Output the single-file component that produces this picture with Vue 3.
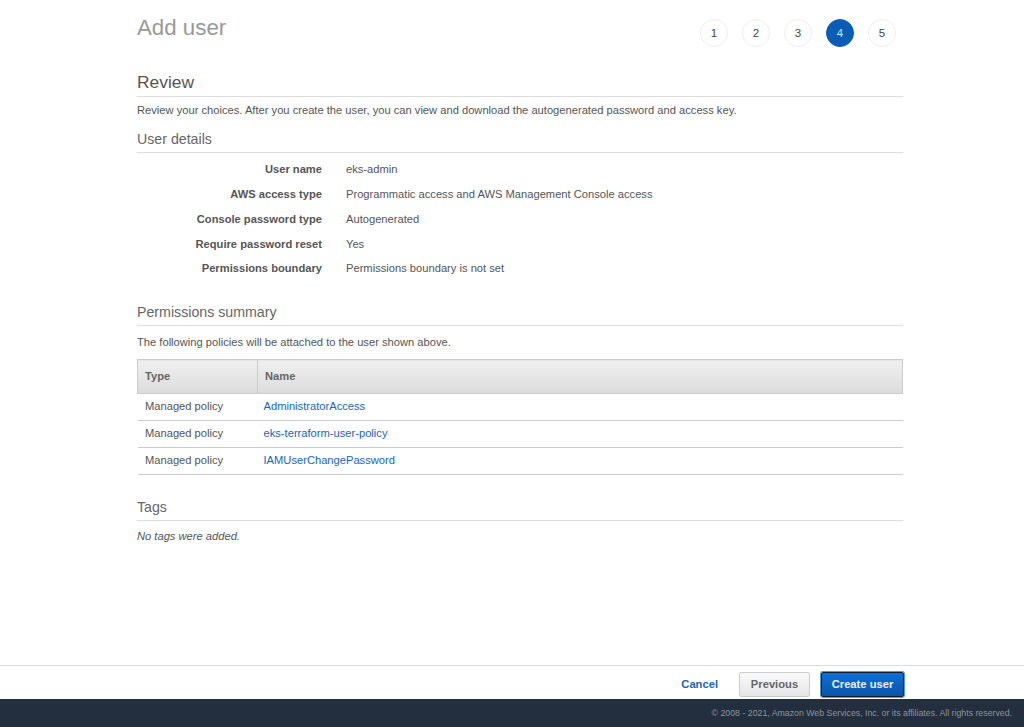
<script setup>
const steps = [1, 2, 3, 4, 5];
const activeStep = 4;

const details = [
  { label: 'User name', value: 'eks-admin' },
  { label: 'AWS access type', value: 'Programmatic access and AWS Management Console access' },
  { label: 'Console password type', value: 'Autogenerated' },
  { label: 'Require password reset', value: 'Yes' },
  { label: 'Permissions boundary', value: 'Permissions boundary is not set' }
];

const policies = ['AdministratorAccess', 'eks-terraform-user-policy', 'IAMUserChangePassword'];
</script>

<template>
  <div class="page">
    <main class="content">
      <header class="top">
        <h1>Add user</h1>
        <ol class="steps">
          <li v-for="step in steps" :key="step" :class="{ active: step === activeStep }">{{ step }}</li>
        </ol>
      </header>

      <h2 class="review-title">Review</h2>
      <p class="intro">Review your choices. After you create the user, you can view and download the autogenerated password and access key.</p>

      <h3 class="details-title">User details</h3>
      <dl class="details">
        <div v-for="row in details" :key="row.label" class="detail-row">
          <dt>{{ row.label }}</dt>
          <dd>{{ row.value }}</dd>
        </div>
      </dl>

      <h3 class="perm-title">Permissions summary</h3>
      <p class="perm-text">The following policies will be attached to the user shown above.</p>
      <table class="policies">
        <thead>
          <tr>
            <th class="col-type">Type</th>
            <th>Name</th>
          </tr>
        </thead>
        <tbody>
          <tr v-for="policy in policies" :key="policy">
            <td class="type-cell">Managed policy</td>
            <td class="name-cell"><a href="#">{{ policy }}</a></td>
          </tr>
        </tbody>
      </table>

      <h3 class="tags-title">Tags</h3>
      <p class="no-tags">No tags were added.</p>
    </main>

    <div class="actions">
      <a class="cancel" href="#">Cancel</a>
      <button class="btn-prev">Previous</button>
      <button class="btn-create">Create user</button>
    </div>
    <footer class="footer">© 2008 - 2021, Amazon Web Services, Inc. or its affiliates. All rights reserved.</footer>
  </div>
</template>

<style>
html, body { margin: 0; background: #fff; }
</style>

<style scoped>
.page {
  height: 727px;
  display: flex;
  flex-direction: column;
  font-family: "Liberation Sans", Arial, sans-serif;
  font-size: 11.17px;
  color: #555;
  overflow: hidden;
}
.content { flex: 1; width: 766px; margin-left: 137px; }

.top { display: flex; justify-content: space-between; height: 72px; }
h1 { margin: 14px 0 0; font-size: 22.3px; line-height: 27px; font-weight: 400; color: #999; }
.steps {
  list-style: none; display: flex; gap: 14px; margin: 19px 7px 0 0; padding: 0;
}
.steps li {
  width: 28px; height: 28px; box-sizing: border-box; border: 1px solid #eee; border-radius: 50%;
  display: flex; align-items: center; justify-content: center; color: #444; font-size: 11.5px;
}
.steps li.active { background: #0b5cb5; border-color: #0b5cb5; color: #cfe3f8; }

h2, h3 { margin: 0; font-weight: 400; border-bottom: 1px solid #ddd; }
.review-title { font-size: 17.4px; line-height: 20px; padding-bottom: 4px; color: #555; }
.intro { margin: 6px 0 0; line-height: 14px; }
.details-title { margin-top: 14px; font-size: 14.2px; line-height: 17px; padding-bottom: 4px; color: #666; }

.details { margin: 4px 0 0; }
.detail-row { display: flex; height: 24.75px; align-items: center; }
.detail-row dt { width: 185px; text-align: right; font-weight: 700; color: #555; }
.detail-row dd { margin: 0 0 0 24px; }

.perm-title { margin-top: 23.25px; font-size: 14.2px; line-height: 17px; padding-bottom: 4px; color: #666; }
.perm-text { margin: 9px 0 0; line-height: 14px; }

.policies { width: 100%; margin-top: 10px; border-collapse: collapse; table-layout: fixed; }
.policies th {
  box-sizing: border-box; height: 34px; padding: 0 7px 2px; text-align: left; font-weight: 700; color: #666;
  background: linear-gradient(#f0f0f0, #dcdcdc);
  border: 1px solid #ccc;
}
.policies th.col-type { width: 120px; }
.policies td { box-sizing: border-box; height: 27px; padding: 0 6px 2px; border-bottom: 1px solid #ccc; }
.policies td.type-cell { padding-left: 7.5px; }
.policies a { color: #1a66b8; text-decoration: none; }

.tags-title { margin-top: 24px; font-size: 14.2px; line-height: 17px; padding-bottom: 4px; color: #666; }
.no-tags { margin: 8px 0 0; line-height: 14px; font-style: italic; }

.actions {
  height: 33px; border-top: 1px solid #ddd;
  display: flex; justify-content: flex-end; align-items: center;
  padding-right: 120px;
}
.cancel { color: #1a66b8; font-weight: 700; text-decoration: none; margin: 2px 21px 0 0; font-size: 11.2px; }
.actions button { font: 700 11.2px "Liberation Sans", Arial, sans-serif; height: 25px; border-radius: 2px; margin-top: 4px; padding-bottom: 3px; }
.btn-prev {
  width: 71px; margin-right: 11px; color: #666; border: 1px solid #ccc;
  background: linear-gradient(#fafafa, #e6e6e6);
}
.btn-create {
  width: 83px; color: #e8f1fb; border: 1px solid #111d2e;
  background: linear-gradient(#0f6fd6, #0a55a8);
  box-shadow: 0 0 0 1px #5f97cf;
}

.footer {
  height: 28px; background: #232f3e; color: #8d949d; font-size: 8.78px;
  display: flex; align-items: center; justify-content: flex-end; padding-right: 12px;
}
</style>
